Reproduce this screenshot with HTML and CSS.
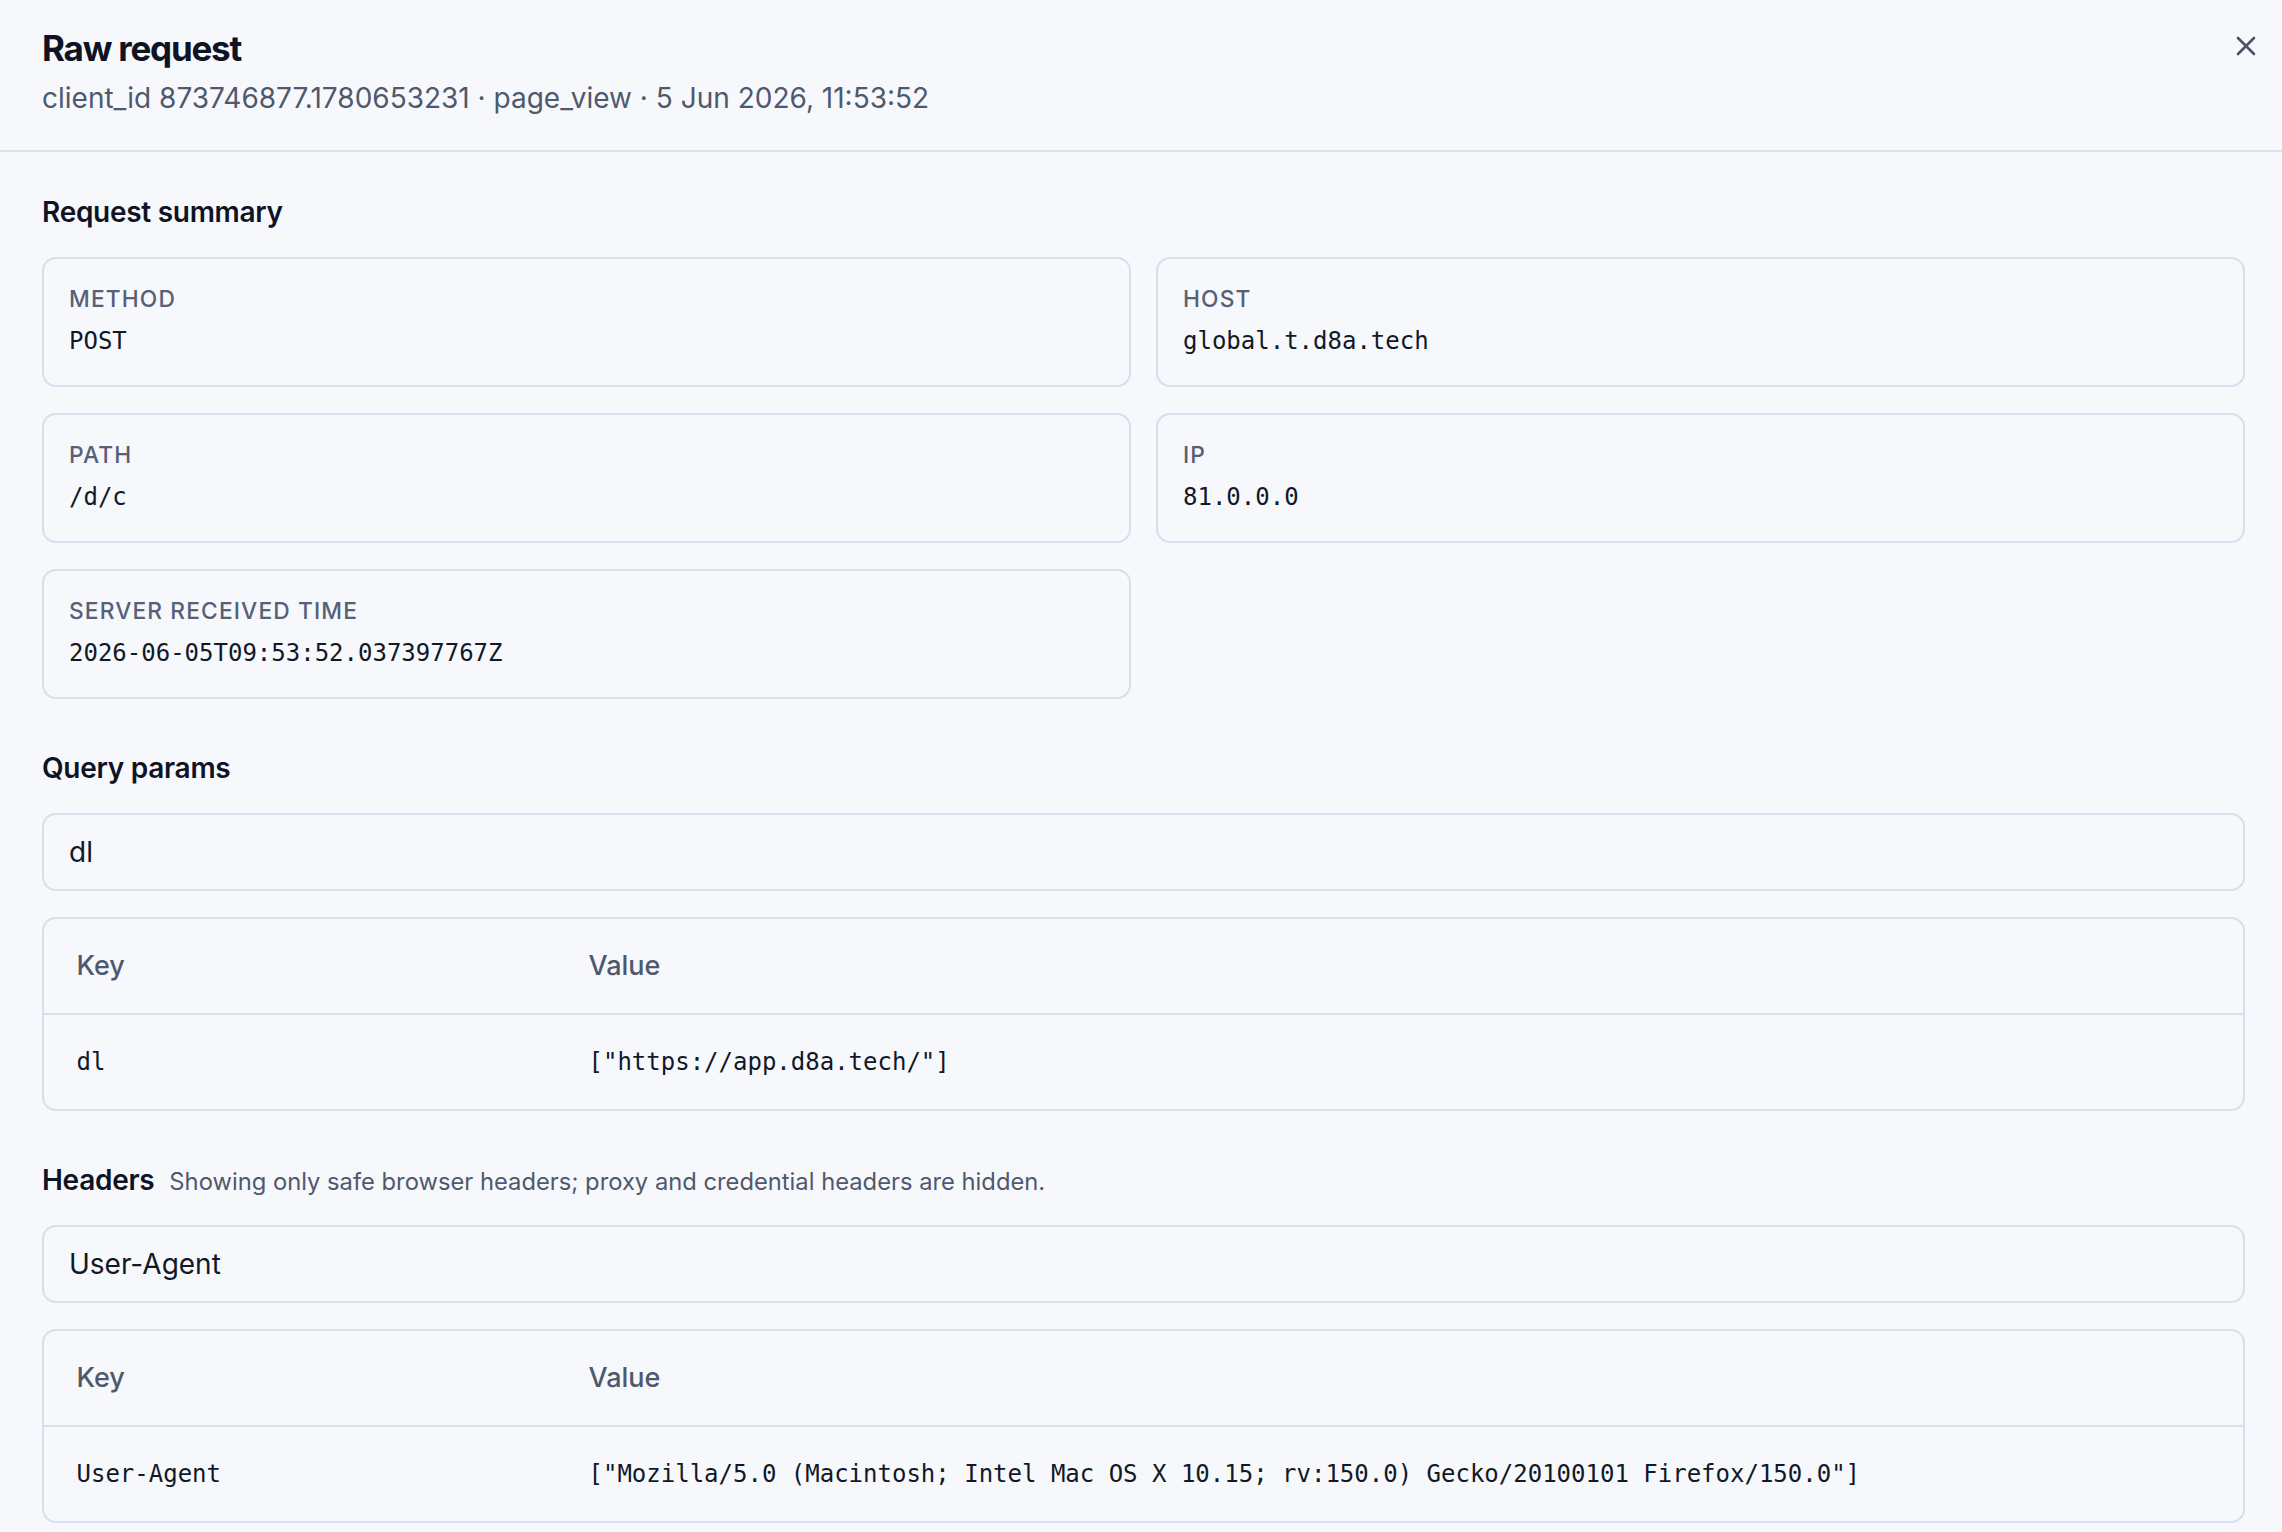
FILE: index.html
```html
<!DOCTYPE html>
<html lang="en">
<head>
<meta charset="utf-8">
<title>Raw request</title>
<link rel="stylesheet" href="styles.css">
</head>
<body>
<div class="panel">
  <header class="head">
    <div class="head-text">
      <h1 class="title">Raw request</h1>
      <p class="subtitle">client_id 873746877.1780653231 · page_view · 5 Jun 2026, 11:53:52</p>
    </div>
    <button class="close" aria-label="Close">
      <svg viewBox="0 0 20 20" width="20" height="20"><path d="M2 2 L18 18 M18 2 L2 18" stroke="#4b5363" stroke-width="2.6" stroke-linecap="round" fill="none"/></svg>
    </button>
  </header>

  <main class="body">
    <section class="section">
      <h2 class="section-title">Request summary</h2>
      <div class="summary-grid">
        <div class="card"><div class="label">Method</div><div class="value">POST</div></div>
        <div class="card"><div class="label">Host</div><div class="value">global.t.d8a.tech</div></div>
        <div class="card"><div class="label">Path</div><div class="value">/d/c</div></div>
        <div class="card"><div class="label">IP</div><div class="value">81.0.0.0</div></div>
        <div class="card"><div class="label">Server received time</div><div class="value">2026-06-05T09:53:52.037397767Z</div></div>
      </div>
    </section>

    <section class="section">
      <h2 class="section-title">Query params</h2>
      <div class="group-name">dl</div>
      <div class="kv">
        <div class="kv-row kv-head"><div class="kv-cell">Key</div><div class="kv-cell">Value</div></div>
        <div class="kv-row kv-body"><div class="kv-cell mono">dl</div><div class="kv-cell mono">["https://app.d8a.tech/"]</div></div>
      </div>
    </section>

    <section class="section">
      <div class="section-head">
        <h2 class="section-title">Headers</h2>
        <span class="note">Showing only safe browser headers; proxy and credential headers are hidden.</span>
      </div>
      <div class="group-name">User-Agent</div>
      <div class="kv">
        <div class="kv-row kv-head"><div class="kv-cell">Key</div><div class="kv-cell">Value</div></div>
        <div class="kv-row kv-body"><div class="kv-cell mono">User-Agent</div><div class="kv-cell mono">["Mozilla/5.0 (Macintosh; Intel Mac OS X 10.15; rv:150.0) Gecko/20100101 Firefox/150.0"]</div></div>
      </div>
    </section>
  </main>
</div>
</body>
</html>
```

FILE: styles.css
```css
* { box-sizing: border-box; }

html, body {
  margin: 0;
  padding: 0;
  background: #f7f8fc;
  height: 100%;
  overflow: hidden;
}

body {
  font-family: Inter, "Noto Sans", "Liberation Sans", sans-serif;
  color: #111827;
}

.panel {
  min-height: 100%;
}

.head {
  display: flex;
  justify-content: space-between;
  align-items: flex-start;
  padding: 24px 26px 31px 42px;
  border-bottom: 2px solid #dde2ee;
}

.title {
  margin: 0;
  font-size: 35px;
  line-height: 49px;
  font-weight: 700;
  letter-spacing: -0.035em;
  color: #0f1424;
}

.subtitle {
  margin: 4px 0 0;
  font-size: 28px;
  line-height: 42px;
  color: #4f586c;
}

.close {
  margin: 12px 0 0;
  padding: 0;
  border: 0;
  background: transparent;
  width: 20px;
  height: 20px;
  display: flex;
  cursor: pointer;
}

.body {
  padding: 39px 37px 0 42px;
}

.section + .section {
  margin-top: 48px;
}

.section-title {
  margin: 0 0 24px;
  font-size: 28px;
  line-height: 42px;
  font-weight: 600;
  letter-spacing: -0.01em;
  color: #0f1424;
}

.section-head {
  display: flex;
  align-items: baseline;
  gap: 15px;
  margin-bottom: 24px;
}

.section-head .section-title {
  margin: 0;
}

.note {
  font-size: 23.75px;
  color: #4f586c;
}

.summary-grid {
  display: grid;
  grid-template-columns: 1fr 1fr;
  column-gap: 25px;
  row-gap: 26px;
}

.card {
  border: 2px solid #d8deee;
  border-radius: 14px;
  background: #f6f8fc;
  padding: 26px 25px 26px;
}

.label {
  font-size: 22.75px;
  line-height: 28px;
  font-weight: 500;
  text-transform: uppercase;
  letter-spacing: 0.05em;
  color: #566077;
}

.value {
  margin-top: 11px;
}

.mono, .value {
  font-family: "DejaVu Sans Mono", "Liberation Mono", monospace;
  font-size: 24px;
  line-height: 35px;
  color: #111827;
}

.group-name {
  border: 2px solid #d8deee;
  border-radius: 14px;
  background: #f6f8fc;
  padding: 16px 25px;
  font-size: 28px;
  line-height: 42px;
  color: #111827;
  margin-bottom: 26px;
}

.kv {
  border: 2px solid #d8deee;
  border-radius: 14px;
  background: #f6f8fc;
  overflow: hidden;
}

.kv-row {
  display: grid;
  grid-template-columns: 512px 1fr;
}

.kv-head {
  border-bottom: 2px solid #d8deee;
}

.kv-head .kv-cell {
  padding: 27px 32.5px;
  font-size: 27px;
  line-height: 40px;
  font-weight: 500;
  color: #4f586c;
}

.kv-body .kv-cell {
  padding: 29.5px 32.5px;
}
```
